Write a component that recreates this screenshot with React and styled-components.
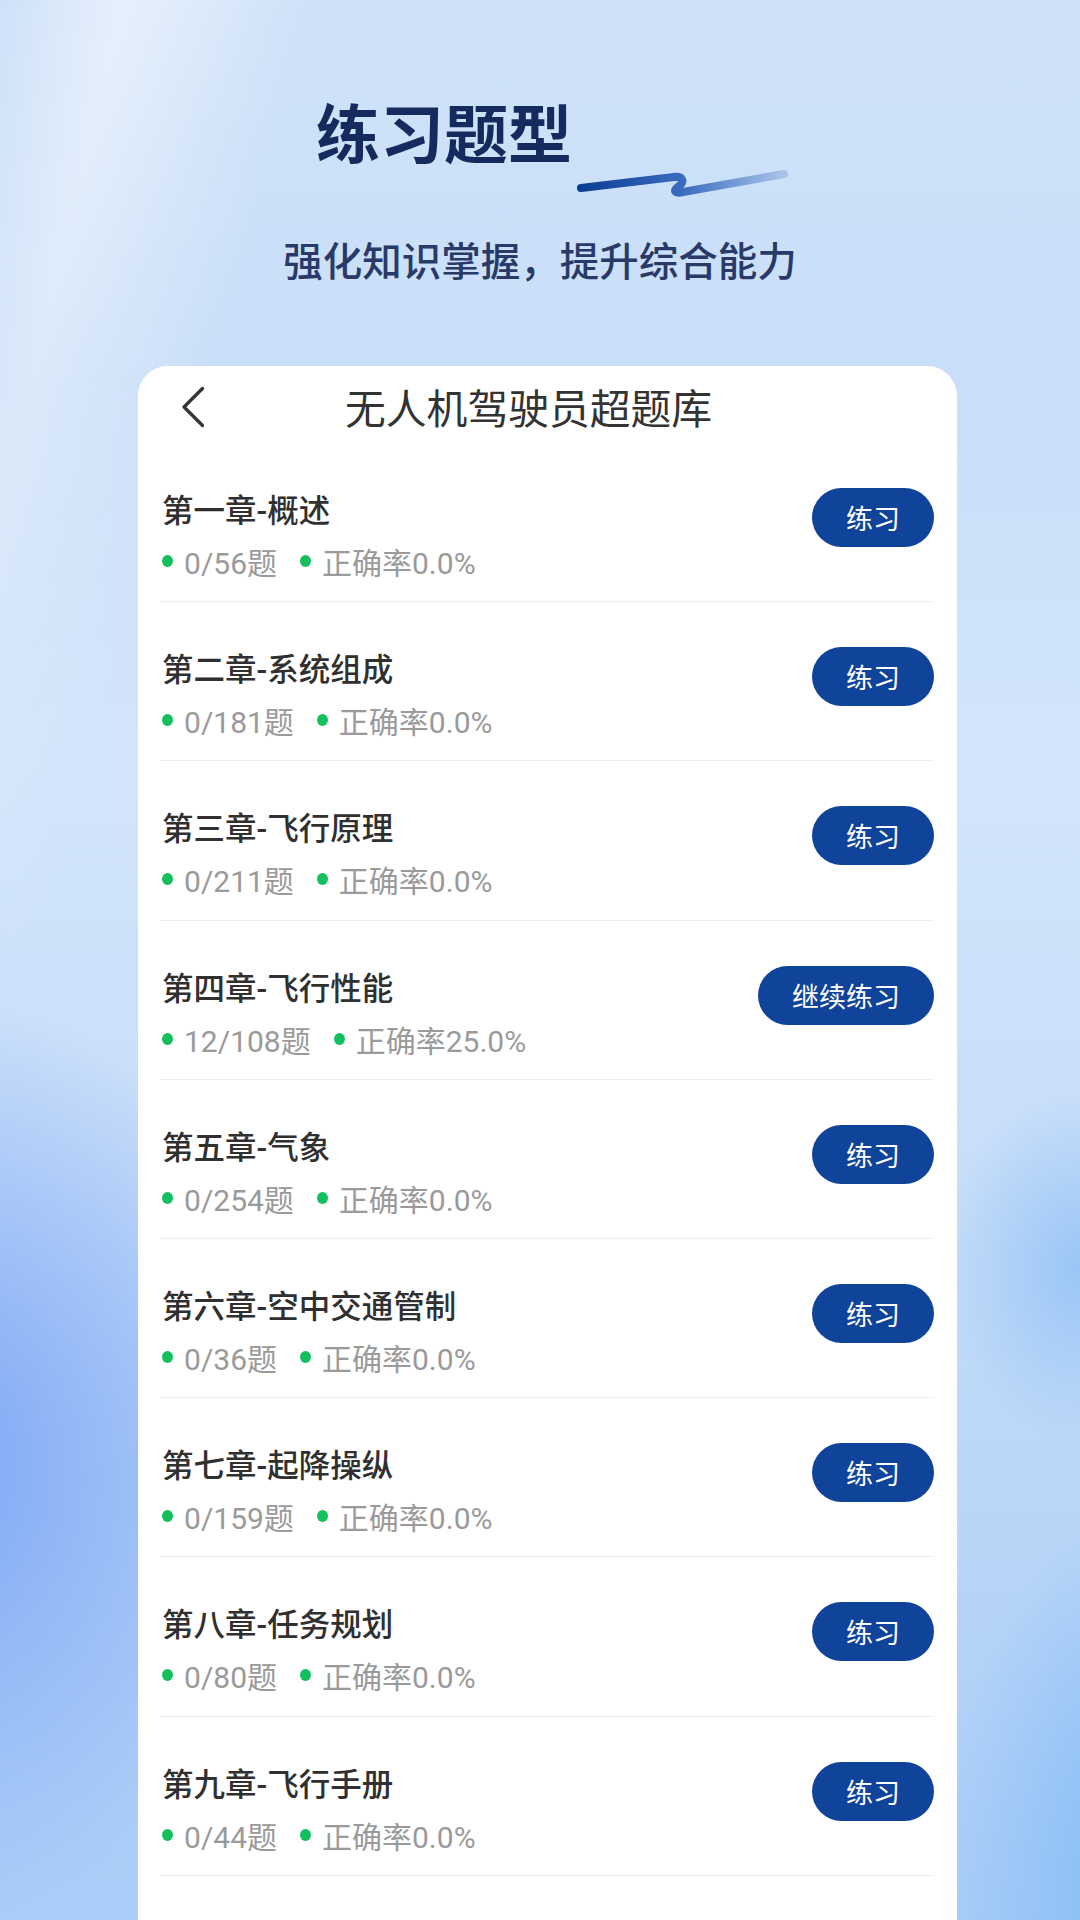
import React from "react";
import styled, { createGlobalStyle } from "styled-components";

const chapters = [
  { title: "第一章-概述", done: 0, total: 56, rate: "0.0" },
  { title: "第二章-系统组成", done: 0, total: 181, rate: "0.0" },
  { title: "第三章-飞行原理", done: 0, total: 211, rate: "0.0" },
  { title: "第四章-飞行性能", done: 12, total: 108, rate: "25.0" },
  { title: "第五章-气象", done: 0, total: 254, rate: "0.0" },
  { title: "第六章-空中交通管制", done: 0, total: 36, rate: "0.0" },
  { title: "第七章-起降操纵", done: 0, total: 159, rate: "0.0" },
  { title: "第八章-任务规划", done: 0, total: 80, rate: "0.0" },
  { title: "第九章-飞行手册", done: 0, total: 44, rate: "0.0" },
  { title: "第十章-综合练习", done: 0, total: 120, rate: "0.0" },
];

function App() {
  return (
    <>
      <GlobalStyle />
      <Page>
        <Hero>
          <HeroTitle>练习题型</HeroTitle>
          <Squiggle width="215" height="32" viewBox="0 0 215 32">
            <defs>
              <linearGradient id="sq" x1="0" y1="0" x2="1" y2="0">
                <stop offset="0" stopColor="#0a3d94" />
                <stop offset="0.5" stopColor="#3c6cc0" />
                <stop offset="1" stopColor="#a9c4e8" />
              </linearGradient>
            </defs>
            <path
              d="M6 21 L99 10 C108 9 110 15 104 19 C97 24 100 27 108 25 L209 7"
              fill="none"
              stroke="url(#sq)"
              strokeWidth="8"
              strokeLinecap="round"
              strokeLinejoin="round"
            />
          </Squiggle>
          <HeroSub>强化知识掌握，提升综合能力</HeroSub>
        </Hero>

        <Card>
          <Header>
            <BackIcon width="24" height="42" viewBox="0 0 24 42">
              <path
                d="M21.5 2.5 L3 21 L21.5 39.5"
                fill="none"
                stroke="#333"
                strokeWidth="3.2"
                strokeLinecap="round"
                strokeLinejoin="round"
              />
            </BackIcon>
            <HeaderTitle>无人机驾驶员超题库</HeaderTitle>
          </Header>
          <List>
            {chapters.map((c) => (
              <Row key={c.title}>
                <Info>
                  <ChapterTitle>{c.title}</ChapterTitle>
                  <Stats>
                    <Stat>
                      <Dot />
                      {c.done}/{c.total}题
                    </Stat>
                    <Stat $gap>
                      <Dot />
                      正确率{c.rate}%
                    </Stat>
                  </Stats>
                </Info>
                <PracticeButton>{c.done > 0 ? "继续练习" : "练习"}</PracticeButton>
              </Row>
            ))}
          </List>
        </Card>
      </Page>
    </>
  );
}

export default App;

const GlobalStyle = createGlobalStyle`
  html, body {
    margin: 0;
    padding: 0;
  }
  body {
    font-family: Roboto, "Noto Sans CJK SC", sans-serif;
  }
`;

const Page = styled.div`
  position: relative;
  width: 1080px;
  height: 1920px;
  overflow: hidden;
  display: flex;
  flex-direction: column;
  background:
    radial-gradient(ellipse 560px 620px at -8% 76%, rgba(118,162,246,0.95), rgba(118,162,246,0) 75%),
    radial-gradient(ellipse 280px 480px at 108% 98%, rgba(124,184,246,0.95), rgba(124,184,246,0) 80%),
    radial-gradient(ellipse 170px 220px at 100% 66%, rgba(146,194,245,0.85), rgba(146,194,245,0) 80%),
    linear-gradient(180deg, #cfe2f9 0%, #c9dff8 20%, #d2e5fb 40%, #c8def9 60%, #b4d3f7 85%, #a9cdf7 100%);

  &::before {
    content: "";
    position: absolute;
    inset: 0;
    background: linear-gradient(104deg, rgba(255,255,255,0) 0%, rgba(255,255,255,0.5) 8%, rgba(255,255,255,0) 20%);
    -webkit-mask-image: linear-gradient(180deg, #000 0%, rgba(0,0,0,0.6) 25%, transparent 55%);
    mask-image: linear-gradient(180deg, #000 0%, rgba(0,0,0,0.6) 25%, transparent 55%);
    pointer-events: none;
  }

  & > * {
    position: relative;
  }
`;

const Hero = styled.div`
  display: flex;
  flex-direction: column;
  padding-top: 98px;
`;

const HeroTitle = styled.div`
  margin-left: 316px;
  font-family: "Noto Sans CJK SC", sans-serif;
  font-size: 64px;
  line-height: 64px;
  font-weight: 700;
  color: #162b5d;
`;

const Squiggle = styled.svg`
  display: block;
  margin: 5px 0 0 575px;
`;

const HeroSub = styled.div`
  margin-top: 36px;
  text-align: center;
  font-family: "Noto Sans CJK SC", sans-serif;
  font-size: 39.5px;
  line-height: 48px;
  font-weight: 500;
  color: #293a68;
`;

const Card = styled.div`
  margin: 83px 0 0 138px;
  width: 819px;
  flex: 1;
  background: #fff;
  border-radius: 30px 30px 0 0;
`;

const Header = styled.div`
  height: 77px;
  padding: 5px 0 0 43px;
  box-sizing: border-box;
  display: flex;
  align-items: center;
`;

const BackIcon = styled.svg`
  display: block;
  flex-shrink: 0;
`;

const HeaderTitle = styled.div`
  margin-left: 140px;
  font-family: "Noto Sans CJK SC", sans-serif;
  font-size: 40.8px;
  line-height: 50px;
  color: #333;
`;

const List = styled.div`
  padding: 0 23px 0 22px;
`;

const Row = styled.div`
  display: flex;
  justify-content: space-between;
  align-items: flex-start;
  padding: 47px 0 20.2px;
  border-bottom: 1px solid #eeeeee;
`;

const Info = styled.div`
  display: flex;
  flex-direction: column;
  padding-left: 2px;
`;

const ChapterTitle = styled.div`
  font-size: 31.5px;
  line-height: 44px;
  font-weight: 500;
  color: #303030;
`;

const Stats = styled.div`
  margin-top: 7px;
  display: flex;
  align-items: center;
  height: 40px;
  font-size: 30px;
  color: #9a9a9a;
`;

const Stat = styled.span`
  display: inline-flex;
  align-items: center;
  margin-left: ${(p) => (p.$gap ? "23px" : "0")};
`;

const Dot = styled.span`
  width: 11px;
  height: 12px;
  border-radius: 50%;
  background: #14bf5e;
  margin-right: 11px;
  position: relative;
  top: 0;
`;

const PracticeButton = styled.button`
  margin-top: -2px;
  height: 59px;
  padding: 0 34px;
  border: none;
  border-radius: 30px;
  background: #10449a;
  color: #fff;
  font-family: "Noto Sans CJK SC", sans-serif;
  font-size: 27px;
  white-space: nowrap;
  cursor: pointer;
`;
